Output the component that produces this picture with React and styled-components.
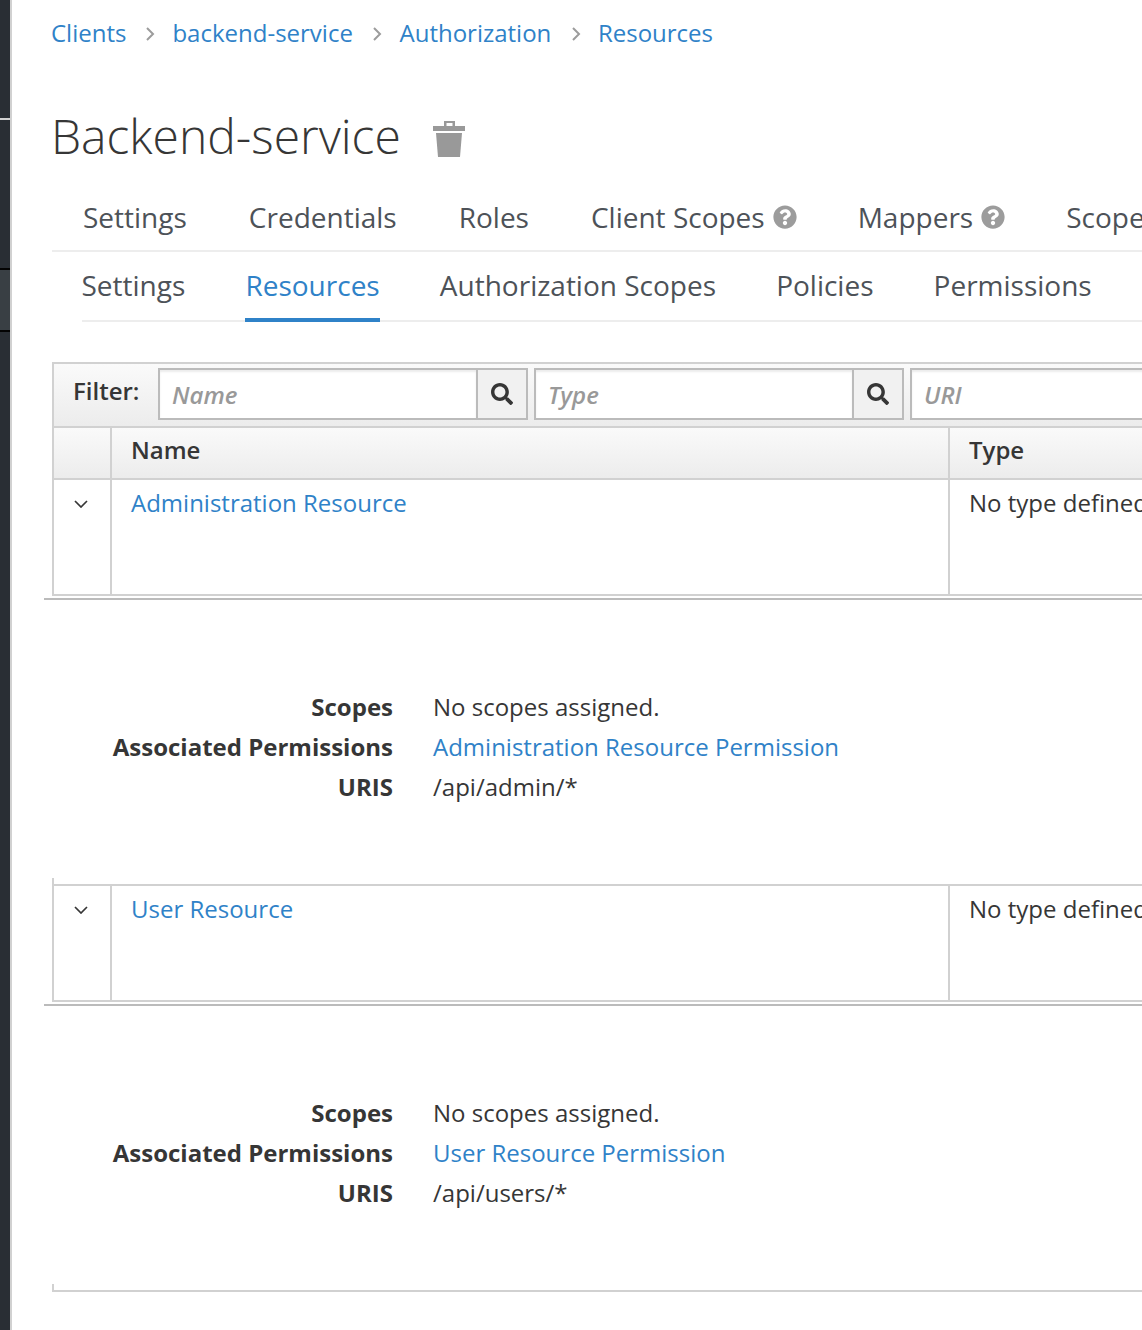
import React from 'react';
import styled, { createGlobalStyle } from 'styled-components';
import { FaSearch, FaQuestionCircle } from 'react-icons/fa';

const GlobalStyle = createGlobalStyle`
  html, body {
    margin: 0;
    padding: 0;
    background: #fff;
  }
  body {
    font-family: 'Open Sans', 'Liberation Sans', sans-serif;
    font-size: 24px;
    color: #363636;
  }
  * {
    box-sizing: border-box;
  }
`;

const Page = styled.div`
  display: flex;
  width: 1142px;
  height: 1330px;
  overflow: hidden;
`;

const Sidebar = styled.div`
  flex: 0 0 12px;
  display: flex;
  flex-direction: column;
  background: #292e34;
  border-right: 2px solid #d1d1d1;
`;

const SidebarBlock = styled.div`
  height: ${(props) => props.$height}px;
  background: ${(props) => props.$color || 'transparent'};
  border-bottom: 2px solid ${(props) => props.$line};
`;

const Main = styled.div`
  flex: 1;
  min-width: 0;
  padding-left: 40px;
  overflow: hidden;
`;

const Breadcrumb = styled.div`
  display: flex;
  align-items: center;
  height: 66px;
  margin-left: -1px;
  white-space: nowrap;
`;

const Crumb = styled.a`
  color: #2f82c8;
  line-height: 34px;
`;

const CrumbSeparator = styled.svg`
  width: 10px;
  height: 14px;
  margin: 2px 18px 0;
  fill: none;
  stroke: #9c9c9c;
  stroke-width: 2;
  transform: translateX(1px);

  &:nth-of-type(n + 2) {
    margin-left: 18.6px;
  }
`;

const TitleRow = styled.div`
  display: flex;
  align-items: center;
  height: 70px;
  margin-top: 35px;
  margin-left: -1px;
`;

const Title = styled.h1`
  margin: 0;
  font-size: 48px;
  font-weight: 300;
  line-height: 70px;
  color: #363636;
`;

const TrashIcon = styled.svg`
  width: 32px;
  height: 37px;
  margin: 5px 0 0 32px;
  fill: #999;
`;

const TabBar = styled.div`
  display: flex;
  height: ${(props) => props.$height}px;
  margin-left: ${(props) => props.$indent}px;
  margin-top: ${(props) => props.$top || 0}px;
  gap: ${(props) => props.$gap}px;
  padding-left: ${(props) => props.$pad || 0}px;
  border-bottom: 2px solid #ededed;
  white-space: nowrap;

  & > :first-child {
    margin-left: ${(props) => props.$lead || 0}px;
  }
`;

const Tab = styled.div`
  display: flex;
  align-items: center;
  height: ${(props) => props.$height}px;
  padding-top: ${(props) => props.$pt || 0}px;
  font-size: 28px;
  color: ${(props) => (props.$active ? '#2f82c8' : '#4d5258')};
  border-bottom: 4px solid ${(props) => (props.$active ? '#2f82c8' : 'transparent')};
`;

const HelpIcon = styled(FaQuestionCircle)`
  width: 24px;
  height: 24px;
  margin-left: 8px;
  margin-right: -1px;
  color: #9c9c9c;
`;

const Table = styled.div`
  width: 1090px;
  margin-top: 40px;
`;

const Toolbar = styled.div`
  display: flex;
  height: 64px;
  padding: 4px 0 0 19px;
  background: linear-gradient(#fafafa, #ececec);
  border-top: 2px solid #d1d1d1;
  border-left: 2px solid #d1d1d1;
`;

const FilterLabel = styled.div`
  flex: 0 0 85px;
  font-weight: 600;
  line-height: 46px;
  color: #363636;
`;

const FilterGroup = styled.div`
  display: flex;
  flex: 0 0 370px;
  height: 52px;
  margin-right: 6px;
  border: 2px solid #bbb;
  background: #fff;
`;

const FilterInput = styled.div`
  flex: 1;
  padding-left: 12px;
  font-style: italic;
  font-weight: 600;
  line-height: 50px;
  color: #999;
  box-shadow: inset 0 2px 2px rgba(3, 3, 3, 0.08);
`;

const FilterButton = styled.div`
  display: flex;
  align-items: center;
  justify-content: center;
  flex: 0 0 50px;
  background: #f1f1f1;
  border-left: 2px solid #bbb;
`;

const SearchIcon = styled(FaSearch)`
  width: 22px;
  height: 22px;
  color: #363636;
`;

const ColumnRow = styled.div`
  display: grid;
  grid-template-columns: 58px 838px 1fr;
  height: ${(props) => props.$height}px;
  border-left: 2px solid #d1d1d1;
  border-top: ${(props) => (props.$noTop ? 'none' : '2px solid #d1d1d1')};
  border-bottom: 2px solid #d1d1d1;
  background: ${(props) => (props.$head ? 'linear-gradient(#fafafa, #ececec)' : '#fff')};
`;

const Cell = styled.div`
  padding: ${(props) => (props.$head ? '4px' : '5px')} 0 0 19px;
  line-height: 36px;
  font-weight: ${(props) => (props.$head ? 600 : 400)};
  white-space: nowrap;
  overflow: hidden;
  border-right: ${(props) => (props.$last ? 'none' : '2px solid #d1d1d1')};
  color: ${(props) => (props.$link ? '#2f82c8' : '#363636')};
`;

const ToggleCell = styled.div`
  display: flex;
  justify-content: center;
  padding: 20px 2px 0 0;
  border-right: 2px solid #d1d1d1;
`;

const Chevron = styled.svg`
  width: 14px;
  height: 8px;
  fill: none;
  stroke: #363636;
  stroke-width: 1.7;
`;

const RowEnd = styled.div`
  height: 4px;
  margin-left: -8px;
  border-bottom: 2px solid #bbb;
`;

const LeftTick = styled.div`
  height: 6px;
  width: 2px;
  background: #d1d1d1;
`;

const Details = styled.div`
  display: grid;
  grid-template-columns: 341px 1fr;
  grid-auto-rows: 40px;
  column-gap: 40px;
  align-content: start;
  height: 278px;
  padding-top: 87px;
  line-height: 40px;
`;

const DetailLabel = styled.div`
  text-align: right;
  font-weight: 700;
  color: #363636;
`;

const DetailValue = styled.div`
  color: ${(props) => (props.$link ? '#2f82c8' : '#363636')};
`;

const TableEnd = styled.div`
  height: 8px;
  border-left: 2px solid #d1d1d1;
  border-bottom: 2px solid #d1d1d1;
`;

const crumbs = ['Clients', 'backend-service', 'Authorization', 'Resources'];

const resources = [
  {
    name: 'Administration Resource',
    permission: 'Administration Resource Permission',
    uri: '/api/admin/*',
  },
  {
    name: 'User Resource',
    permission: 'User Resource Permission',
    uri: '/api/users/*',
  },
];

function Resource({ resource, first }) {
  return (
    <>
      {!first && <LeftTick />}
      <ColumnRow $height={first ? 116 : 118} $noTop={first}>
        <ToggleCell>
          <Chevron viewBox="0 0 14 8">
            <path d="M1 1l6 6 6-6" />
          </Chevron>
        </ToggleCell>
        <Cell $link>{resource.name}</Cell>
        <Cell $last>No type defined</Cell>
      </ColumnRow>
      <RowEnd />
      <Details>
        <DetailLabel>Scopes</DetailLabel>
        <DetailValue>No scopes assigned.</DetailValue>
        <DetailLabel>Associated Permissions</DetailLabel>
        <DetailValue $link>{resource.permission}</DetailValue>
        <DetailLabel>URIS</DetailLabel>
        <DetailValue>{resource.uri}</DetailValue>
      </Details>
    </>
  );
}

export default function App() {
  return (
    <Page>
      <GlobalStyle />
      <Sidebar>
        <SidebarBlock $height={120} $line="#d1d1d1" />
        <SidebarBlock $height={150} $line="#030303" />
        <SidebarBlock $height={62} $color="#393f44" $line="#030303" />
      </Sidebar>
      <Main>
        <Breadcrumb>
          {crumbs.map((crumb, i) => (
            <React.Fragment key={crumb}>
              {i > 0 && (
                <CrumbSeparator viewBox="0 0 10 14">
                  <path d="M2 1l6 6-6 6" />
                </CrumbSeparator>
              )}
              <Crumb>{crumb}</Crumb>
            </React.Fragment>
          ))}
        </Breadcrumb>
        <TitleRow>
          <Title>Backend-service</Title>
          <TrashIcon viewBox="0 0 32 37">
            <path
              fillRule="evenodd"
              d="M0 6h11V1h11v5h10v5H0zM13.5 3v3h6V3z"
            />
            <path d="M3 13h26l-2 24H5z" />
          </TrashIcon>
        </TitleRow>
        <TabBar $height={80} $indent={0} $pad={31} $gap={62} $top={1}>
          <Tab $height={78} $pt={16}>Settings</Tab>
          <Tab $height={78} $pt={16}>Credentials</Tab>
          <Tab $height={78} $pt={16}>Roles</Tab>
          <Tab $height={78} $pt={16}>
            Client Scopes
            <HelpIcon />
          </Tab>
          <Tab $height={78} $pt={16}>
            Mappers
            <HelpIcon />
          </Tab>
          <Tab $height={78} $pt={16}>Scope</Tab>
        </TabBar>
        <TabBar $height={70} $indent={30} $gap={60.1} $lead={-0.5}>
          <Tab $height={70}>Settings</Tab>
          <Tab $height={70} $active>Resources</Tab>
          <Tab $height={70}>Authorization Scopes</Tab>
          <Tab $height={70}>Policies</Tab>
          <Tab $height={70}>Permissions</Tab>
        </TabBar>
        <Table>
          <Toolbar>
            <FilterLabel>Filter:</FilterLabel>
            <FilterGroup>
              <FilterInput>Name</FilterInput>
              <FilterButton>
                <SearchIcon />
              </FilterButton>
            </FilterGroup>
            <FilterGroup>
              <FilterInput>Type</FilterInput>
              <FilterButton>
                <SearchIcon />
              </FilterButton>
            </FilterGroup>
            <FilterGroup>
              <FilterInput>URI</FilterInput>
            </FilterGroup>
          </Toolbar>
          <ColumnRow $height={54} $head>
            <Cell $head />
            <Cell $head>Name</Cell>
            <Cell $head $last>Type</Cell>
          </ColumnRow>
          {resources.map((resource, i) => (
            <Resource key={resource.name} resource={resource} first={i === 0} />
          ))}
          <TableEnd />
        </Table>
      </Main>
    </Page>
  );
}
